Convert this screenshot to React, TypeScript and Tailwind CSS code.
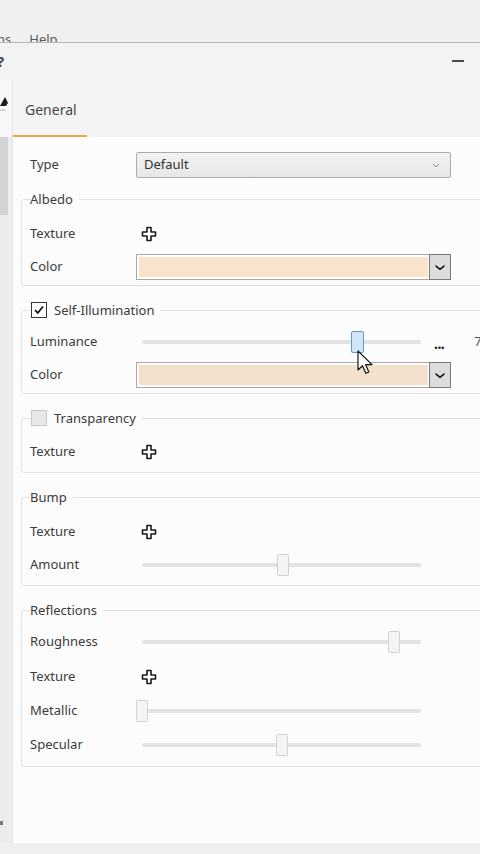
import React from "react";

const LABEL_W = "w-[106px] shrink-0";

function PlusIcon() {
  return (
    <svg width="16" height="16" viewBox="0 0 16 16" className="ml-[5px]">
      <path
        d="M6 1.5h4v4.5h4.5v4h-4.5v4.5h-4v-4.5h-4.5v-4h4.5z"
        fill="#ffffff"
        stroke="#1a1a1a"
        strokeWidth="1.6"
        strokeLinejoin="round"
      />
    </svg>
  );
}

function Checkbox({ checked }: { checked: boolean }) {
  return checked ? (
    <span className="w-4 h-4 border border-[#333] bg-white flex items-center justify-center">
      <svg width="12" height="12" viewBox="0 0 12 12">
        <path d="M2 6.2l2.8 2.8 5.2-6.5" fill="none" stroke="#111" strokeWidth="1.8" />
      </svg>
    </span>
  ) : (
    <span className="block w-4 h-4 border border-[#c9c9c9] bg-[#e8e8e8]" />
  );
}

function Slider({ value, active = false }: { value: number; active?: boolean }) {
  // thumb is 12px wide, track inset 6px on both sides
  const left = Math.round(value * 279);
  return (
    <div className="relative w-[291px] h-[22px] shrink-0">
      <div className="absolute left-[6px] right-[6px] top-[9px] h-[4px] rounded-full bg-[#e3e3e3]" />
      <div
        className={
          active
            ? "absolute top-0 w-[13px] h-[22px] rounded-[2px] border border-[#5b9bd5] bg-[#cfe6f8]"
            : "absolute top-0 w-[12px] h-[22px] rounded-[2px] border border-[#d2d2d2] bg-[#f4f4f4]"
        }
        style={{ left }}
      />
    </div>
  );
}

function ColorCombo({ color }: { color: string }) {
  return (
    <div className="flex w-[315px] h-[26px] border border-[#a9a9a9] bg-white">
      <div className="flex-1 m-[2px] mr-0" style={{ background: color }} />
      <div className="w-[22px] ml-[1px] -my-px -mr-px border border-[#7a7a7a] bg-[#dcdcdc] flex items-center justify-center">
        <svg width="10" height="7" viewBox="0 0 10 7">
          <path d="M0.5 0.8L5 4.3 9.5 0.8V2.8L5 6.3 0.5 2.8z" fill="#111" />
        </svg>
      </div>
    </div>
  );
}

function Row({ label, h = "h-[33px]", children }: { label: string; h?: string; children?: React.ReactNode }) {
  return (
    <div className={`flex items-center ${h}`}>
      <span className={LABEL_W}>{label}</span>
      {children}
    </div>
  );
}

function Group({
  title,
  check,
  pad,
  children,
}: {
  title: string;
  check?: boolean;
  pad: string;
  children: React.ReactNode;
}) {
  return (
    <fieldset className={`w-[520px] border border-[#e3e3e3] rounded-[3px] px-2 mb-[15px] ${pad}`}>
      <legend className="flex items-center gap-[7px] pr-[6px] h-[18px] leading-[18px]">
        {check !== undefined && (
          <span className="ml-px">
            <Checkbox checked={check} />
          </span>
        )}
        <span>{title}</span>
      </legend>
      {children}
    </fieldset>
  );
}

export default function App() {
  return (
    <div className="w-[480px] h-[854px] overflow-hidden bg-[#efeff0] text-[13px] text-[#3b3b3b] font-['Noto_Sans','Open_Sans',sans-serif] flex flex-col">
      {/* menu bar, cut by the panel */}
      <div className="h-[42px] overflow-hidden bg-[#f0f0f0] shrink-0">
        <div className="pt-[31px] flex gap-[18px] text-[#5a5a5a] leading-4 -ml-[3px]">
          <span>ns</span>
          <span>Help</span>
        </div>
      </div>
      <div className="h-px bg-[#b8b8b8] shrink-0" />

      {/* title bar */}
      <div className="h-[37px] bg-[#f3f3f3] flex items-start justify-between shrink-0">
        <span className="-ml-[3px] mt-[8px] text-[15px] font-bold text-[#444] leading-5">?</span>
        <span className="mt-[17px] mr-[16px] w-[12px] h-[2px] bg-[#4a4a4a]" />
      </div>

      <div className="flex flex-1 min-h-0">
        {/* left strip */}
        <div className="w-[13px] shrink-0 flex flex-col bg-[#ececed] border-r border-[#e0e0e0]">
          <div className="h-[57px] bg-[#f7f7f7] flex items-start">
            <svg width="9" height="26" viewBox="0 0 9 26" className="mt-[6px]">
              <path d="M0 20L5 11 8 17 6 20z" fill="#1c1c1c" />
              <path d="M0 24h6" stroke="#bbb" strokeWidth="1" />
            </svg>
          </div>
          <div className="w-[8px] h-[78px] bg-[#d3d3d3]" />
          <div className="flex-1" />
          <div className="h-[4px] w-[3px] bg-[#777] mb-[18px]" />
        </div>

        {/* main panel */}
        <div className="flex-1 flex flex-col min-w-0">
          <div className="h-[57px] bg-[#f4f4f4] flex items-end shrink-0">
            <div className="pl-3 pr-[10px] pb-[15px] border-b-[3px] border-[#e5a84d] text-[14px] text-[#454545] leading-5 -mb-px">
              General
            </div>
          </div>
          <div className="flex-1 bg-[#fcfcfc] pl-2 pt-[15px]">
            <div className="flex items-center h-[26px] pl-[9px] mb-[12px]">
              <span className={LABEL_W}>Type</span>
              <div className="w-[315px] h-[26px] border border-[#acacac] rounded-[2px] bg-gradient-to-b from-[#f2f2f2] to-[#e6e6e6] flex items-center justify-between pl-[7px] pr-[10px]">
                <span className="text-[#333]">Default</span>
                <svg width="8" height="5" viewBox="0 0 8 5">
                  <path d="M1 1l3 3 3-3" fill="none" stroke="#8a8a8a" strokeWidth="1" />
                </svg>
              </div>
            </div>

            <Group title="Albedo" pad="pt-[9px] pb-px">
              <Row label="Texture">
                <PlusIcon />
              </Row>
              <Row label="Color" h="h-[34px]">
                <ColorCombo color="#f9e3cb" />
              </Row>
            </Group>

            <Group title="Self-Illumination" check={true} pad="pt-[6px] pb-px">
              <Row label="Luminance">
                <Slider value={0.77} active />
                <span className="ml-[7px] mt-[4px] text-[14px] font-bold tracking-[-0.5px] text-[#222] leading-none">...</span>
                <span className="ml-[30px] text-[#555]">7</span>
              </Row>
              <Row label="Color" h="h-[34px]">
                <ColorCombo color="#f3e0cd" />
              </Row>
            </Group>

            <Group title="Transparency" check={false} pad="pt-[8px] pb-[4px]">
              <Row label="Texture">
                <PlusIcon />
              </Row>
            </Group>

            <Group title="Bump" pad="pt-[9px] pb-[4px]">
              <Row label="Texture">
                <PlusIcon />
              </Row>
              <Row label="Amount">
                <Slider value={0.505} />
              </Row>
            </Group>

            <Group title="Reflections" pad="pt-[6px] pb-[4px]">
              <Row label="Roughness" h="h-[34px]">
                <Slider value={0.905} />
              </Row>
              <Row label="Texture" h="h-[35px]">
                <PlusIcon />
              </Row>
              <Row label="Metallic" h="h-[34px]">
                <Slider value={0} />
              </Row>
              <Row label="Specular" h="h-[34px]">
                <Slider value={0.5} />
              </Row>
            </Group>
          </div>
        </div>
      </div>
      <div className="h-[11px] bg-[#efeff1] shrink-0" />

      {/* mouse pointer over the luminance thumb */}
      <svg
        width="18"
        height="26"
        viewBox="0 0 18 26"
        className="absolute left-[357px] top-[350px] pointer-events-none"
      >
        <path
          d="M1 1v19l4.5-4.3 3.3 7.6 3-1.3-3.2-7.4H15z"
          fill="#ffffff"
          stroke="#111"
          strokeWidth="1.2"
          strokeLinejoin="round"
        />
      </svg>
    </div>
  );
}
